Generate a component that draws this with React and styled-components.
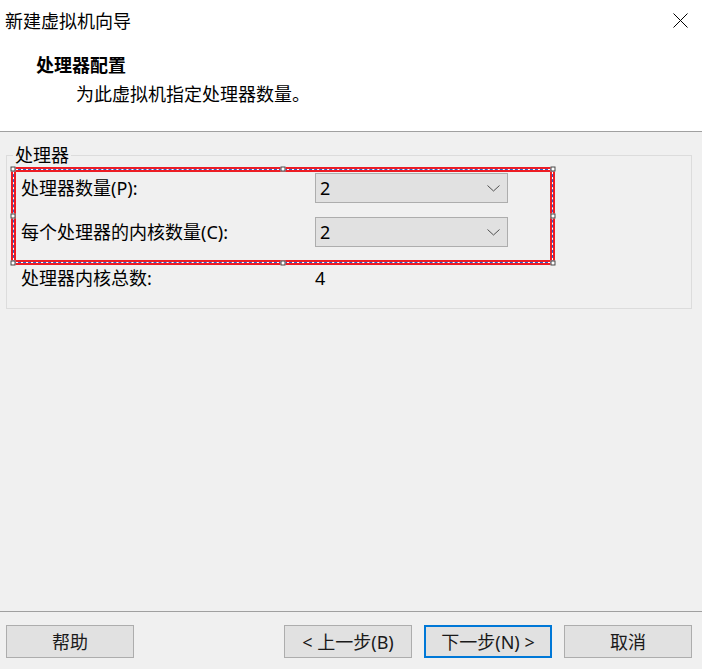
import styled, { createGlobalStyle, css } from "styled-components";

const GlobalStyle = createGlobalStyle`
  html, body {
    margin: 0;
    padding: 0;
    background: #f0f0f0;
  }
  body {
    font-family: "Noto Sans", "Noto Sans CJK SC", sans-serif;
    font-size: 18px;
    color: #000;
  }
  * { box-sizing: border-box; }
`;

const Window = styled.div`
  width: 702px;
  height: 669px;
  display: flex;
  flex-direction: column;
  background: #f0f0f0;
  overflow: hidden;
`;

const Header = styled.header`
  height: 132px;
  background: #ffffff;
  border-bottom: 1px solid #a0a0a0;
  display: flex;
  flex-direction: column;
`;

const TitleBar = styled.div`
  height: 41px;
  padding: 0 14px 0 5px;
  display: flex;
  align-items: center;
  justify-content: space-between;
  line-height: 24px;
`;

const Heading = styled.h1`
  margin: 12px 0 0;
  padding-left: 36px;
  font-size: 18px;
  font-weight: 700;
  line-height: 24px;
`;

const Subheading = styled.p`
  margin: 5px 0 0;
  padding-left: 76px;
  line-height: 24px;
`;

const Body = styled.main`
  flex: 1;
  padding: 11px 10px 0 6px;
`;

const Group = styled.fieldset`
  margin: 0;
  padding: 0 0 18px;
  min-width: 0;
  border: 1px solid #dcdcdc;
`;

const Legend = styled.legend`
  margin-left: 6px;
  padding: 0 2px;
  line-height: 25px;
`;

const Selection = styled.div`
  position: relative;
  margin: -1px 0 0 4px;
  width: 544px;
  padding: 1px 0 13px 5px;
  border: 5px solid #ed1c24;
  display: flex;
  flex-direction: column;
  gap: 14px;

  &::before,
  &::after {
    content: "";
    position: absolute;
    inset: -3px;
    pointer-events: none;
  }
  &::before { border: 1px solid #ffffff; }
  &::after { border: 1px dashed #2f5ec9; }
`;

const Handle = styled.span`
  position: absolute;
  z-index: 1;
  width: 5px;
  height: 5px;
  background: #ffffff;
  border: 1px solid #444444;
  left: ${p => p.$x};
  top: ${p => p.$y};
  transform: translate(-50%, -50%);
`;

const Row = styled.div`
  display: grid;
  grid-template-columns: 294px 193px;
  align-items: center;
  height: ${p => p.$height || "30px"};
  ${p => p.$indent && css`padding-left: ${p.$indent};`}
`;

const Label = styled.span`
  line-height: 24px;
  white-space: nowrap;
`;

const Select = styled.div`
  height: 30px;
  background: #e1e1e1;
  border: 1px solid #adadad;
  display: flex;
  align-items: center;
  justify-content: space-between;
  padding: 0 7px 0 4px;
  line-height: 24px;
`;

const Footer = styled.footer`
  border-top: 1px solid #a0a0a0;
  padding: 13px 10px 11px 6px;
  display: flex;
  align-items: center;
  gap: 12px;
`;

const Button = styled.button`
  width: 128px;
  height: 33px;
  padding: 0;
  font: inherit;
  line-height: 24px;
  color: #1a1a1a;
  background: #e1e1e1;
  border: 1px solid #adadad;
  ${p => p.$first && css`margin-right: auto;`}
  ${p => p.$primary && css`border: 2px solid #0078d7;`}
`;

function Chevron() {
  return (
    <svg width="13" height="7" viewBox="0 0 13 7">
      <polyline points="0.5,0.5 6.5,6 12.5,0.5" fill="none" stroke="#505050" strokeWidth="1" />
    </svg>
  );
}

function CloseIcon() {
  return (
    <svg width="15" height="15" viewBox="0 0 15 15">
      <path d="M0.5 0.5 L14.5 14.5 M14.5 0.5 L0.5 14.5" stroke="#000" strokeWidth="1" />
    </svg>
  );
}

const handles = [
  ["-3px", "-3px"], ["50%", "-3px"], ["calc(100% + 3px)", "-3px"],
  ["-3px", "50%"], ["calc(100% + 3px)", "50%"],
  ["-3px", "calc(100% + 3px)"], ["50%", "calc(100% + 3px)"], ["calc(100% + 3px)", "calc(100% + 3px)"],
];

export default function App() {
  return (
    <>
      <GlobalStyle />
      <Window>
        <Header>
          <TitleBar>
            <span>新建虚拟机向导</span>
            <CloseIcon />
          </TitleBar>
          <Heading>处理器配置</Heading>
          <Subheading>为此虚拟机指定处理器数量。</Subheading>
        </Header>

        <Body>
          <Group>
            <Legend>处理器</Legend>
            <Selection>
              {handles.map(([x, y], i) => <Handle key={i} $x={x} $y={y} />)}
              <Row>
                <Label>处理器数量(P):</Label>
                <Select>2<Chevron /></Select>
              </Row>
              <Row>
                <Label>每个处理器的内核数量(C):</Label>
                <Select>2<Chevron /></Select>
              </Row>
            </Selection>
            <Row $height="25px" $indent="14px">
              <Label>处理器内核总数:</Label>
              <Label>4</Label>
            </Row>
          </Group>
        </Body>

        <Footer>
          <Button $first>帮助</Button>
          <Button>&lt; 上一步(B)</Button>
          <Button $primary>下一步(N) &gt;</Button>
          <Button>取消</Button>
        </Footer>
      </Window>
    </>
  );
}
